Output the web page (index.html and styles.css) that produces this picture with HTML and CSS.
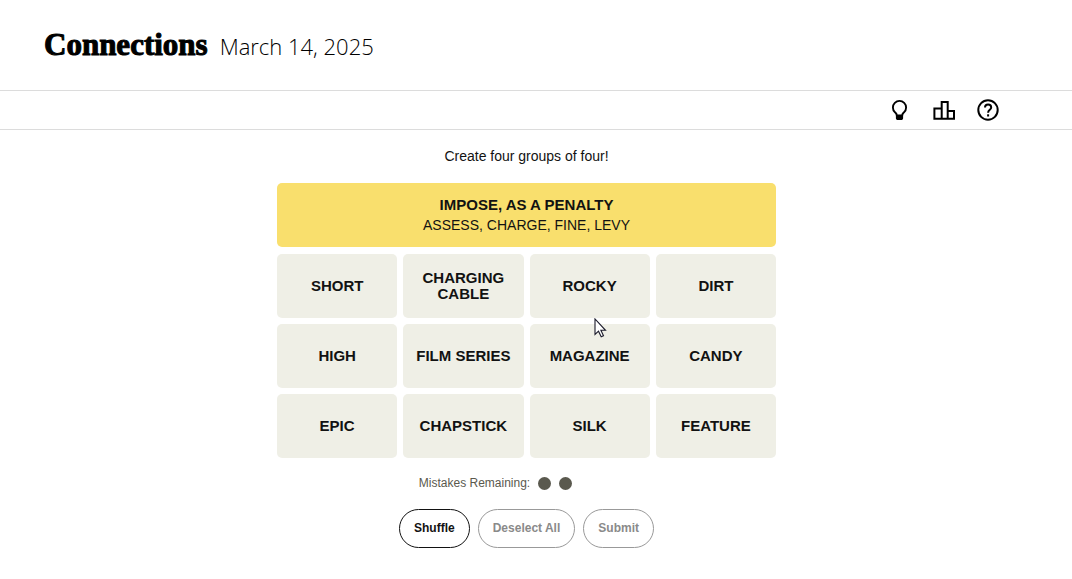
FILE: index.html
```html
<!DOCTYPE html>
<html lang="en">
<head>
<meta charset="utf-8">
<meta name="viewport" content="width=device-width, initial-scale=1">
<title>Connections</title>
<link rel="stylesheet" href="styles.css">
</head>
<body>
<header class="masthead">
  <h1 class="title">Connections</h1>
  <span class="date">March 14, 2025</span>
</header>
<nav class="toolbar" aria-label="Game tools">
  <button class="tool" type="button" aria-label="Hints">
    <svg width="24" height="24" viewBox="0 0 24 24"><path d="M8.800 17.500c0-1.600-.7-2.300-1.800-3.200A6.600 6.600 0 0 1 4.900 9.500a6.600 6.600 0 0 1 13.200 0c0 2-.8 3.600-2.100 4.800-1.100.9-1.800 1.600-1.800 3.200" fill="none" stroke="#000" stroke-width="1.900"/><path d="M7.900 16.500h7.200v3.500c0 1.400-.8 2.100-2 2.100H9.900c-1.200 0-2-.7-2-2.100z"/></svg>
  </button>
  <button class="tool" type="button" aria-label="Statistics">
    <svg width="24" height="24" viewBox="0 0 24 24"><path d="M2.400 10.600H9.700V20.700H2.400zM9.700 4H15.700V20.700H9.700zM15.700 13H22V20.700H15.700z" fill="none" stroke="#000" stroke-width="2"/></svg>
  </button>
  <button class="tool" type="button" aria-label="Help">
    <svg width="24" height="24" viewBox="0 0 24 24"><circle cx="12" cy="12" r="9.700" fill="none" stroke="#000" stroke-width="2"/><path d="M9 9.500a3.100 3.100 0 1 1 6.200 0c0 2.200-3.100 2.500-3.100 5.200" fill="none" stroke="#000" stroke-width="2"/><path d="M11.100 16.300h2v2.200h-2z"/></svg>
  </button>
</nav>
<main class="game">
  <p class="prompt">Create four groups of four!</p>
  <section class="board">
    <div class="solved">
      <h2 class="solved-name">IMPOSE, AS A PENALTY</h2>
      <p class="solved-words">ASSESS, CHARGE, FINE, LEVY</p>
    </div>
    <div class="cards">
      <button class="card" type="button">SHORT</button>
      <button class="card" type="button">CHARGING CABLE</button>
      <button class="card" type="button">ROCKY</button>
      <button class="card" type="button">DIRT</button>
      <button class="card" type="button">HIGH</button>
      <button class="card" type="button">FILM SERIES</button>
      <button class="card" type="button">MAGAZINE</button>
      <button class="card" type="button">CANDY</button>
      <button class="card" type="button">EPIC</button>
      <button class="card" type="button">CHAPSTICK</button>
      <button class="card" type="button">SILK</button>
      <button class="card" type="button">FEATURE</button>
    </div>
    <svg class="pointer" width="13" height="20" viewBox="0 0 13 20" aria-hidden="true"><path d="M1 1v15.500l3.500-3.300 2.700 5.600 2.300-1.100-2.600-5.400H11.500z" fill="#fff" stroke="#1a1a2a" stroke-width="1.100"/></svg>
  </section>
  <div class="mistakes">
    <span>Mistakes Remaining:</span>
    <span class="dots"><span class="dot"></span><span class="dot"></span></span>
  </div>
  <div class="actions">
    <button class="action" type="button">Shuffle</button>
    <button class="action" type="button" disabled>Deselect All</button>
    <button class="action" type="button" disabled>Submit</button>
  </div>
</main>
</body>
</html>
```
FILE: styles.css
```css
* { box-sizing: border-box; }
body {
  margin: 0;
  background: #fff;
  color: #121212;
  font-family: "Liberation Sans", Arial, sans-serif;
}
h1, h2, p { margin: 0; }
button { font-family: inherit; cursor: pointer; }
.masthead {
  display: flex;
  align-items: baseline;
  gap: 12px;
  padding: 25px 44px 25px;
}
.title {
  font-family: "Liberation Serif", serif;
  font-size: 31px;
  line-height: 40px;
  font-weight: 700;
  color: #000;
  -webkit-text-stroke: 1px #000;
}
.date {
  font-family: "Open Sans", sans-serif;
  font-size: 22px;
  line-height: 28px;
  font-weight: 300;
  color: #000;
}
.toolbar {
  display: flex;
  justify-content: flex-end;
  align-items: center;
  gap: 20px;
  height: 40px;
  padding-right: 72px;
  border-top: 1px solid #dcdcdc;
  border-bottom: 1px solid #dcdcdc;
}
.tool {
  display: block;
  padding: 0;
  border: 0;
  background: none;
}
.tool svg { display: block; }
.game {
  display: flex;
  flex-direction: column;
  align-items: center;
  padding: 16px 19px 24px 0;
}
.prompt {
  font-size: 14px;
  line-height: 20px;
}
.board {
  position: relative;
  width: 100%;
  max-width: 499px;
  margin-top: 17px;
}
.solved {
  display: flex;
  flex-direction: column;
  justify-content: center;
  min-height: 64px;
  border-radius: 5px;
  background: #f9df6d;
  text-align: center;
}
.solved-name {
  font-size: 15px;
  line-height: 20px;
}
.solved-words {
  font-size: 14px;
  line-height: 20px;
}
.cards {
  display: grid;
  grid-template-columns: repeat(4, 1fr);
  gap: 6px;
  margin-top: 7px;
}
.card {
  min-height: 64px;
  padding: 0 8px;
  border: 0;
  border-radius: 5px;
  background: #efefe6;
  color: #121212;
  font-size: 15px;
  line-height: 16px;
  font-weight: 700;
}
.pointer {
  position: absolute;
  left: 317px;
  top: 135px;
}
.mistakes {
  display: flex;
  align-items: center;
  gap: 8px;
  margin-top: 15px;
  font-size: 12px;
  line-height: 20px;
  color: #5a594e;
}
.dots {
  display: flex;
  gap: 8px;
  min-width: 96px;
}
.dot {
  width: 13px;
  height: 13px;
  border-radius: 50%;
  background: #5a594e;
}
.actions {
  display: flex;
  gap: 8px;
  margin-top: 16px;
}
.action {
  height: 39px;
  padding: 0 14px 2px;
  border: 1px solid #121212;
  border-radius: 20px;
  background: #fff;
  color: #121212;
  font-size: 12px;
  font-weight: 700;
}
.action:disabled {
  border-color: #999;
  color: #8a8a8a;
  cursor: default;
}
```
